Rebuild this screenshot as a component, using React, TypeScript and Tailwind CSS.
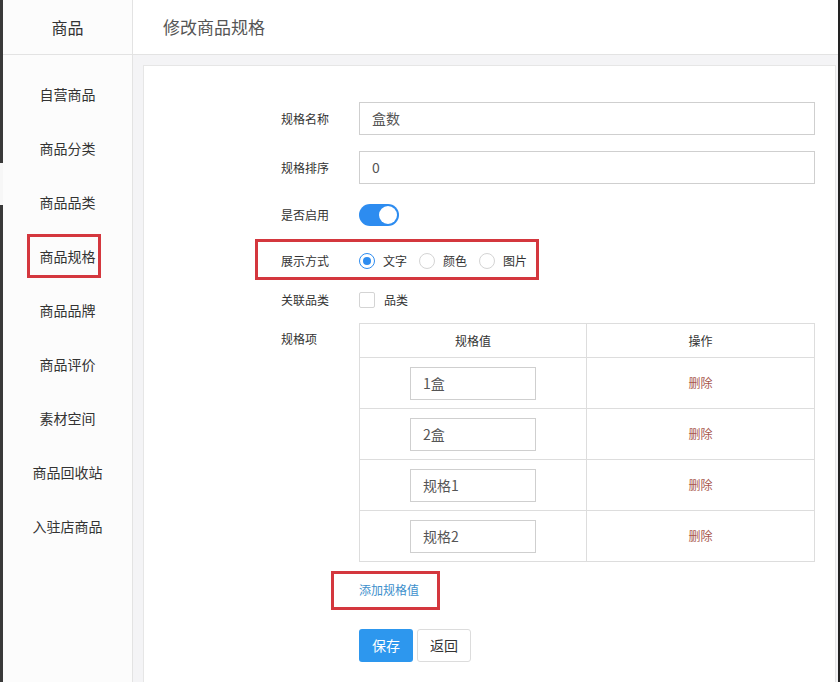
import React from "react";

const font = { fontFamily: '"Noto Sans CJK SC", "Noto Sans", sans-serif' };

const sideItems = [
  "自营商品",
  "商品分类",
  "商品品类",
  "商品规格",
  "商品品牌",
  "商品评价",
  "素材空间",
  "商品回收站",
  "入驻店商品",
];

const specs = ["1盒", "2盒", "规格1", "规格2"];

function Label({ children }: { children: React.ReactNode }) {
  return <div className="w-[78px] shrink-0 text-[12px] text-[#333]">{children}</div>;
}

function Radio({ checked, label }: { checked?: boolean; label: string }) {
  return (
    <div className="flex items-center">
      <span
        className={
          checked
            ? "flex h-[16px] w-[16px] items-center justify-center rounded-full border border-[#2d8cf0] bg-white"
            : "flex h-[16px] w-[16px] items-center justify-center rounded-full border border-[#d4d4d4] bg-white"
        }
      >
        {checked ? <span className="h-[8px] w-[8px] rounded-full bg-[#2d8cf0]" /> : null}
      </span>
      <span className="ml-[8px] text-[12px] text-[#333]">{label}</span>
    </div>
  );
}

export default function App() {
  return (
    <div className="flex h-[682px] w-[840px] overflow-hidden bg-white" style={font}>
      {/* left dark strip */}
      <div className="flex w-[3px] shrink-0 flex-col">
        <div className="h-[163px] bg-[#3a3a3a]" />
        <div className="h-[42px] bg-[#f7f7f7]" />
        <div className="flex-1 bg-[#3a3a3a]" />
      </div>

      {/* sidebar */}
      <div className="flex w-[130px] shrink-0 flex-col border-r border-[#e3e3e3] bg-[#fcfcfc]">
        <div className="flex h-[55px] items-center justify-center border-b border-[#e3e3e3] text-[16px] text-[#333]">
          商品
        </div>
        <div className="flex flex-col pt-[12px]">
          {sideItems.map((t) => (
            <div key={t} className="relative flex h-[54px] items-center justify-center text-[14px] text-[#333]">
              {t}
              {t === "商品规格" ? (
                <div className="absolute left-[24px] top-[5px] h-[44px] w-[74px] border-[3px] border-[#d4373e]" />
              ) : null}
            </div>
          ))}
        </div>
      </div>

      {/* main */}
      <div className="flex min-w-0 flex-1 flex-col">
        <div className="flex h-[55px] shrink-0 items-center border-b border-[#e3e3e3] bg-white pl-[30px] text-[17px] text-[#555]">
          修改商品规格
        </div>
        <div className="flex flex-1 bg-[#f4f4f6] pl-[10px] pt-[10px]">
          <div className="flex-1 border border-b-0 border-[#e6e6e6] bg-white pl-[137px] pt-[36px]">
            {/* row 1 */}
            <div className="flex h-[33px] items-center">
              <Label>规格名称</Label>
              <div className="flex h-[33px] w-[456px] items-center border border-[#cfcfcf] px-[12px] text-[14px] text-[#555]">
                盒数
              </div>
            </div>
            {/* row 2 */}
            <div className="mt-[16px] flex h-[33px] items-center">
              <Label>规格排序</Label>
              <div className="flex h-[33px] w-[456px] items-center border border-[#cfcfcf] px-[12px] text-[14px] text-[#555]">
                0
              </div>
            </div>
            {/* row 3 */}
            <div className="mt-[20px] flex h-[22px] items-center">
              <Label>是否启用</Label>
              <div className="flex h-[22px] w-[40px] items-center justify-end rounded-full bg-[#2d8cf0] pr-[2px]">
                <span className="h-[18px] w-[18px] rounded-full bg-white" />
              </div>
            </div>
            {/* row 4 */}
            <div className="relative mt-[24px] flex h-[22px] items-center">
              <div className="absolute left-[-26px] top-[-11px] h-[41px] w-[284px] border-[3px] border-[#d4373e]" />
              <Label>展示方式</Label>
              <div className="flex items-center gap-[12px]">
                <Radio checked label="文字" />
                <Radio label="颜色" />
                <Radio label="图片" />
              </div>
            </div>
            {/* row 5 */}
            <div className="mt-[17px] flex h-[22px] items-center">
              <Label>关联品类</Label>
              <span className="h-[16px] w-[16px] rounded-[2px] border border-[#d4d4d4] bg-white" />
              <span className="ml-[9px] text-[12px] text-[#333]">品类</span>
            </div>
            {/* row 6 */}
            <div className="mt-[12px] flex">
              <div className="w-[78px] shrink-0 pt-[7px] text-[12px] text-[#333]">规格项</div>
              <div className="w-[456px] border border-[#dddddd]">
                <div className="flex h-[34px] border-b border-[#dddddd] text-[12px] text-[#333]">
                  <div className="flex w-[227px] items-center justify-center border-r border-[#dddddd]">规格值</div>
                  <div className="flex flex-1 items-center justify-center">操作</div>
                </div>
                {specs.map((s, i) => (
                  <div
                    key={s}
                    className={
                      i < specs.length - 1
                        ? "flex h-[51px] border-b border-[#dddddd]"
                        : "flex h-[50px]"
                    }
                  >
                    <div className="flex w-[227px] items-center justify-center border-r border-[#dddddd]">
                      <div className="flex h-[33px] w-[126px] items-center border border-[#cfcfcf] px-[12px] text-[14px] text-[#555]">
                        {s}
                      </div>
                    </div>
                    <div className="flex flex-1 items-center justify-center text-[12px] text-[#a8574c]">删除</div>
                  </div>
                ))}
              </div>
            </div>
            {/* add */}
            <div className="mt-[18px] flex h-[20px] items-center pl-[78px]">
              <div className="relative text-[12px] text-[#3d8fcc]">
                <div className="absolute left-[-28px] top-[-10px] h-[39px] w-[109px] border-[3px] border-[#d4373e]" />
                添加规格值
              </div>
            </div>
            {/* buttons */}
            <div className="mt-[29px] flex gap-[4px] pl-[78px]">
              <div className="flex h-[33px] w-[54px] items-center justify-center rounded-[3px] bg-[#2d97ee] text-[14px] text-white">
                保存
              </div>
              <div className="flex h-[33px] w-[54px] items-center justify-center rounded-[3px] border border-[#dcdcdc] bg-white text-[14px] text-[#333]">
                返回
              </div>
            </div>
          </div>
          <div className="w-[2px] shrink-0 bg-[#f4f4f6]" />
        </div>
      </div>
      <div className="w-[2px] shrink-0 bg-[#222]" />
    </div>
  );
}
